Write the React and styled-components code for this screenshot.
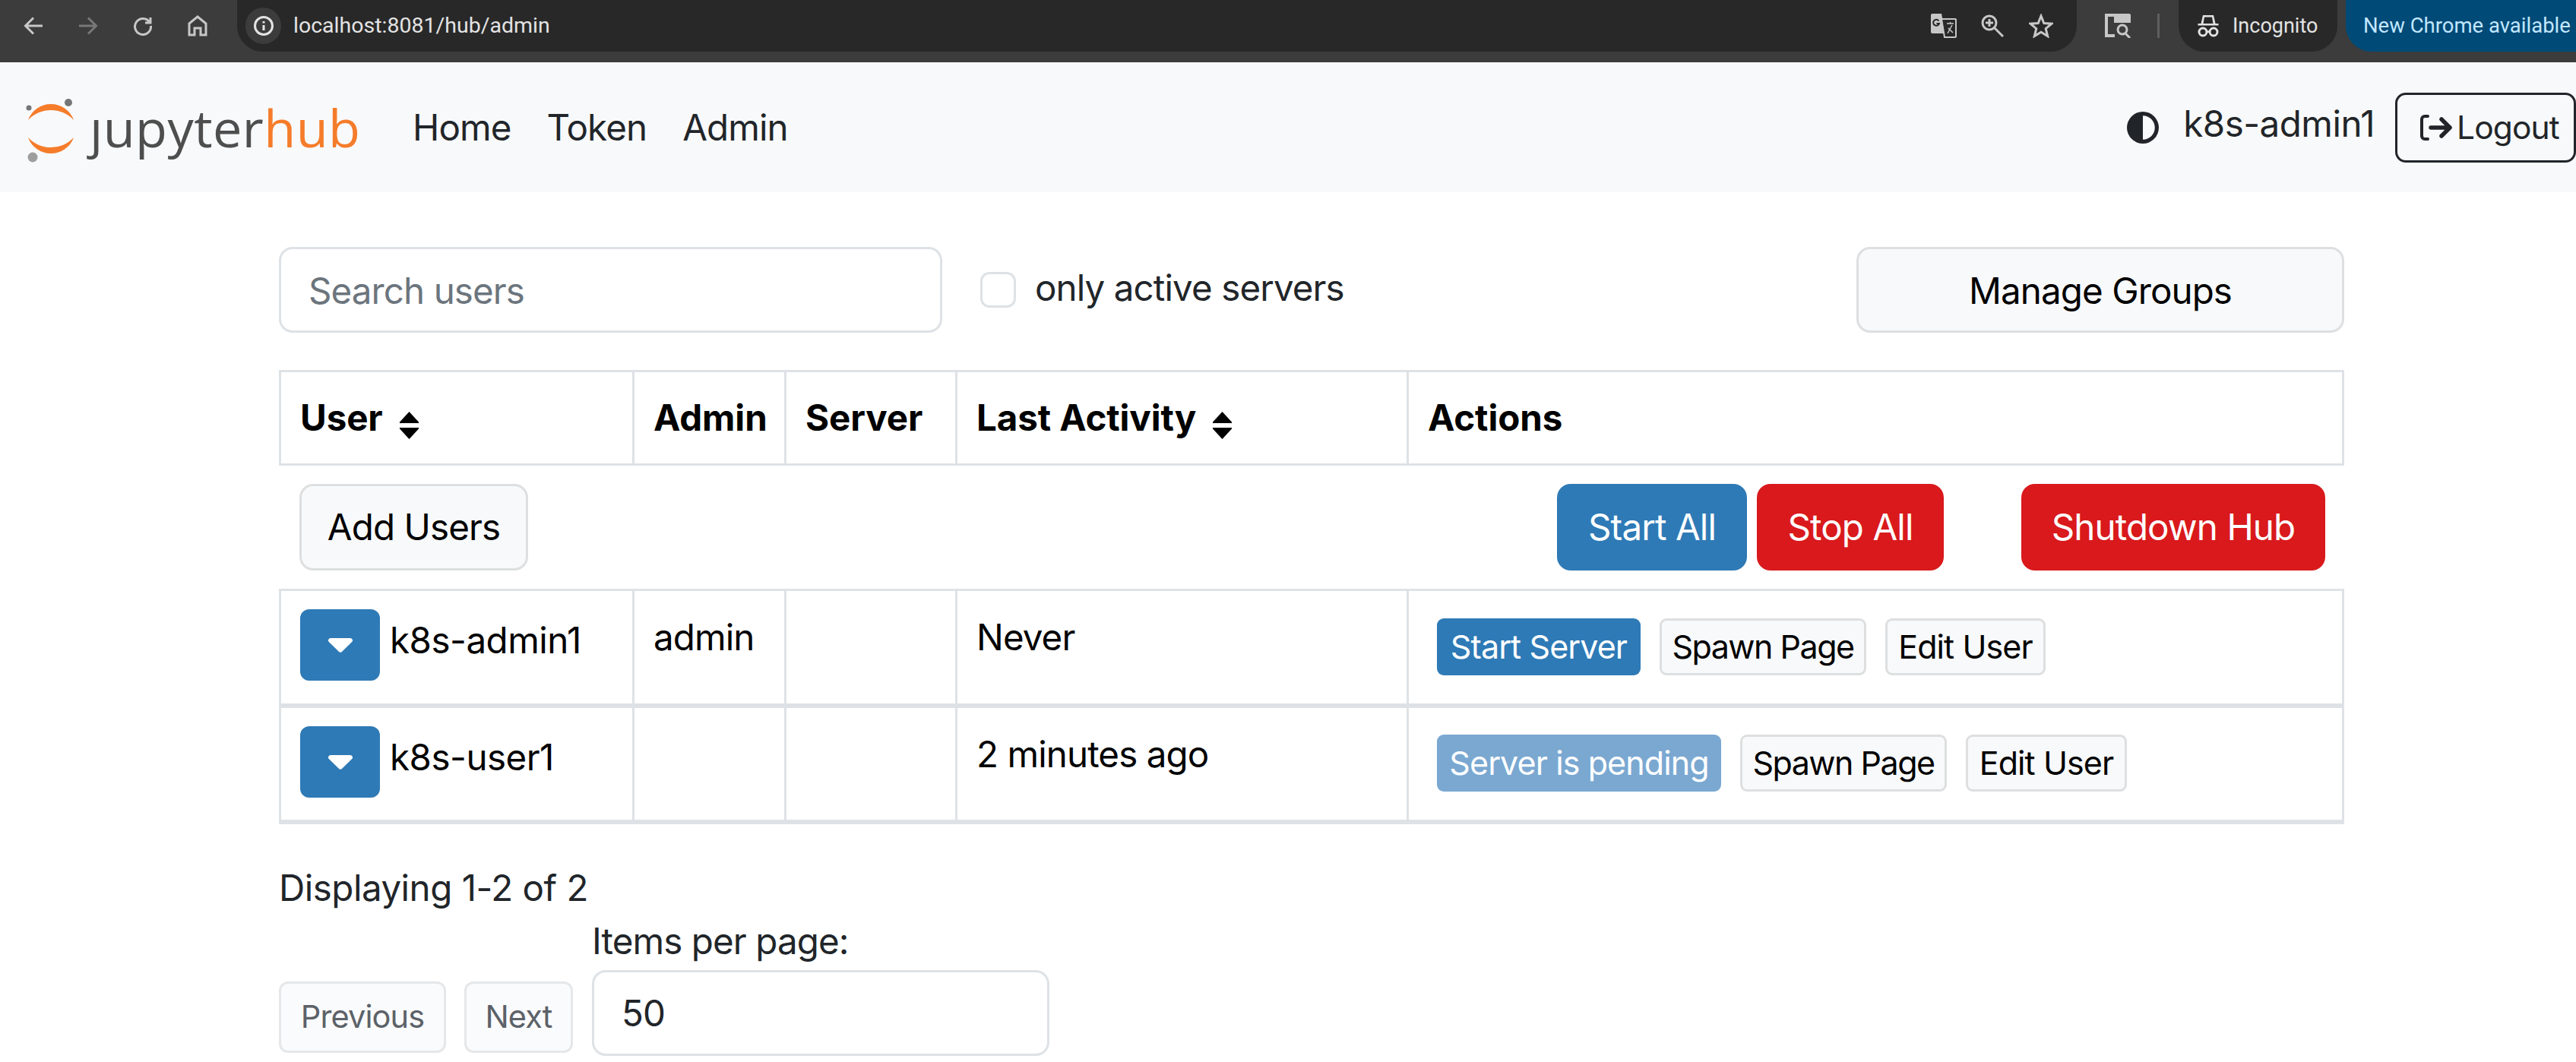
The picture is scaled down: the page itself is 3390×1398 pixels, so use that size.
import React from 'react'
import styled, { createGlobalStyle } from 'styled-components'
import { FaCircleHalfStroke } from 'react-icons/fa6'

const GlobalStyle = createGlobalStyle`
  html, body {
    margin: 0;
    padding: 0;
    background: #fff;
    overflow: hidden;
  }
  body {
    width: 3390px;
    height: 1398px;
    font-family: Inter, "Liberation Sans", sans-serif;
    font-size: 47.5px;
    line-height: 1.5;
    letter-spacing: -0.9px;
    color: #212529;
  }
  * {
    box-sizing: border-box;
  }
`

const Page = styled('div')`
  width: 3390px;
  height: 1398px;
  overflow: hidden;
`

/* browser chrome */
const ChromeBar = styled('div')`
  display: flex;
  align-items: flex-start;
  height: 82px;
  padding-left: 8px;
  overflow: hidden;
  background: #3c3c3c;
  font-family: Roboto, sans-serif;
  font-size: 27px;
  line-height: 68px;
  letter-spacing: 0;
`

const ChromeIcon = styled('div')`
  display: flex;
  flex: none;
  align-items: center;
  justify-content: center;
  width: ${props => props.size || 72}px;
  height: 68px;
  margin-left: ${props => props.offset || 0}px;
  color: ${props => props.dim ? '#787878' : '#c7c7c7'};
`

const UrlPill = styled('div')`
  display: flex;
  flex: none;
  align-items: center;
  width: 2421px;
  height: 68px;
  margin-left: 16px;
  padding: 0 15px 0 11px;
  border-radius: 0 0 34px 34px;
  background: #282828;
  color: #e3e3e3;
`

const InfoBadge = styled('div')`
  display: flex;
  align-items: center;
  justify-content: center;
  width: 47px;
  height: 48px;
  margin-right: 16px;
  border-radius: 24px;
  background: #3c3c3c;
  color: #e3e3e3;
`

const UrlText = styled('span')`
  flex: 1;
  font-size: 28.5px;
`

const Separator = styled('div')`
  flex: none;
  width: 3px;
  height: 32px;
  margin: 18px 0 0 20px;
  background: #5f5f5f;
`

const IncognitoPill = styled('div')`
  display: flex;
  flex: none;
  align-items: center;
  gap: 17px;
  width: 209px;
  height: 68px;
  margin-left: 25px;
  padding-left: 24px;
  border-radius: 0 0 34px 34px;
  background: #282828;
  color: #e3e3e3;
`

const UpdatePill = styled('div')`
  flex: none;
  width: 320px;
  height: 68px;
  margin-left: 11px;
  padding-left: 23px;
  border-radius: 0 0 0 34px;
  background: #004a77;
  color: #c2e7ff;
  font-size: 27.5px;
  white-space: nowrap;
`

/* jupyterhub navbar */
const Navbar = styled('nav')`
  display: flex;
  align-items: center;
  height: 171px;
  padding-left: 30px;
  background: #f8f9fa;
`

const LogoMark = styled('svg')`
  flex: none;
  width: 74px;
  height: 102px;
  margin-top: 6px;
`

const LogoText = styled('div')`
  width: 352px;
  margin-left: 14px;
  color: #4e4e4e;
  font-family: "Open Sans", sans-serif;
  font-size: 68.5px;
  line-height: 80px;
  letter-spacing: 0.4px;
  white-space: nowrap;
`

const LogoHub = styled('span')`
  color: #f57c2a;
`

const NavLinks = styled('div')`
  display: flex;
  gap: 47px;
  margin-left: 73px;
`

const NavLink = styled('a')`
  color: #212529;
`

const NavRight = styled('div')`
  display: flex;
  align-items: center;
  margin-left: auto;
`

const ThemeToggle = styled('div')`
  display: flex;
  margin-right: 32px;
  color: #212529;
`

const UserName = styled('span')`
  margin-right: 27px;
  position: relative;
  top: -5px;
  letter-spacing: -0.5px;
`

const LogoutButton = styled('div')`
  display: flex;
  flex: none;
  align-items: center;
  gap: 5px;
  width: 238px;
  height: 92px;
  padding-left: 29px;
  border: 3px solid #212529;
  border-radius: 14px;
  font-size: 42.5px;
  white-space: nowrap;
`

/* admin content */
const Content = styled('main')`
  width: 2718px;
  margin-left: 367px;
`

const Toolbar = styled('div')`
  display: flex;
  align-items: center;
  height: 113px;
  margin-top: 72px;
`

const TextInput = styled('div')`
  display: flex;
  align-items: center;
  width: ${props => props.width}px;
  height: 113px;
  padding: 2px 0 0 36px;
  border: 3px solid #dee2e6;
  border-radius: 18px;
  background: #fff;
  color: ${props => props.muted ? '#6c757d' : '#212529'};
`

const CheckBox = styled('div')`
  width: 47px;
  height: 47px;
  margin: 0 25px 0 50px;
  border: 3px solid #dee2e6;
  border-radius: 12px;
`

const CheckLabel = styled('span')`
  position: relative;
  top: -3px;
`

const Button = styled('div')`
  display: flex;
  flex: none;
  align-items: center;
  justify-content: center;
  width: ${props => props.width}px;
  height: ${props => props.height || 114}px;
  border-radius: 18px;
  background: ${props => props.bg || '#f8f9fa'};
  border: ${props => props.bg ? 'none' : '3px solid #dedfe0'};
  color: ${props => props.color || '#000'};
  white-space: nowrap;
`

const SmallButton = styled(Button)`
  height: 75px;
  border-radius: 9px;
  font-size: 43px;
`

const SpawnButton = styled(SmallButton)`
  letter-spacing: -1.5px;
`

const ManageButton = styled(Button)`
  margin-left: auto;
  padding-top: 2px;
`

const UserTable = styled('table')`
  width: 2718px;
  margin-top: 49px;
  border-collapse: separate;
  border-spacing: 0;
  table-layout: fixed;
  color: #000;
`

const HeadCell = styled('th')`
  height: 126px;
  padding: 0 24px 0 25px;
  border-top: 3px solid #dee2e6;
  border-bottom: 3px solid #dee2e6;
  border-right: 3px solid #dee2e6;
  font-weight: 700;
  letter-spacing: -0.1px;
  text-align: left;
  white-space: nowrap;

  &:first-child {
    border-left: 3px solid #dee2e6;
  }
`

const SortIcon = styled('svg')`
  width: 29px;
  height: 38px;
  margin-left: 20px;
  vertical-align: -12px;
`

const ActionRowCell = styled('td')`
  height: 162px;
  padding: 0 25px 0 27px;
`

const ActionRow = styled('div')`
  display: flex;
  align-items: center;
  gap: 13px;
`

const SpacedButton = styled(Button)`
  margin-left: ${props => props.offset || 0}px;
`

const Cell = styled('td')`
  height: ${props => props.height}px;
  padding: ${props => props.top}px 24px 0 25px;
  border-top: ${props => props.first ? 3 : 0}px solid #dee2e6;
  border-bottom: 6px solid #dee2e6;
  border-right: 3px solid #dee2e6;
  vertical-align: top;

  &:first-child {
    border-left: 3px solid #dee2e6;
  }
`

const UserCell = styled('div')`
  display: flex;
  align-items: center;
  gap: 13px;
  white-space: nowrap;
`

const UserLabel = styled('span')`
  margin-bottom: 12px;
  letter-spacing: -0.5px;
`

const CaretButton = styled('div')`
  display: flex;
  flex: none;
  align-items: center;
  justify-content: center;
  width: 105px;
  height: 94px;
  border-radius: 12px;
  background: #2e7ab6;
`

const CellText = styled('div')`
  margin-top: 1px;
  white-space: nowrap;
`

const ActionsCell = styled('div')`
  display: flex;
  gap: 25px;
  margin-left: 12px;
`

const Footer = styled('div')`
  margin-top: 48px;
`

const Summary = styled('div')`
  letter-spacing: -0.5px;
`

const Pager = styled('div')`
  display: flex;
  align-items: flex-end;
  margin-top: -1px;
`

const PagerButton = styled('div')`
  display: flex;
  align-items: center;
  justify-content: center;
  width: ${props => props.width}px;
  height: 94px;
  margin: 0 ${props => props.gap}px 4px 0;
  border: 3px solid #e5e7e9;
  border-radius: 12px;
  background: #fafbfc;
  color: #5c6268;
  font-size: 41.5px;
`

const PageSize = styled('div')`
  display: flex;
  flex-direction: column;
`

const PageSizeLabel = styled('span')`
  margin-bottom: 2px;
`

const Triangle = () => (
  <svg width="32" height="19" viewBox="0 0 32 19">
    <path d="M3 0h26a3 3 0 0 1 2.400 4.800L18.400 17.600a3.400 3.400 0 0 1-4.800 0L.6 4.800A3 3 0 0 1 3 0z" fill="#fff" />
  </svg>
)

const Sort = () => (
  <SortIcon viewBox="0 0 28 38">
    <path d="M14 1 26 14a1 1 0 0 1-1 2H3a1 1 0 0 1-1-2z" fill="#000" />
    <path d="M14 37 26 24a1 1 0 0 0-1-2H3a1 1 0 0 0-1 2z" fill="#000" />
  </SortIcon>
)

const stroke = { fill: 'none', stroke: 'currentColor', strokeWidth: 3 }

const App = () => (
  <Page>
    <GlobalStyle />
    <ChromeBar>
      <ChromeIcon>
        <svg width="26" height="24" viewBox="0 0 26 24" {...stroke}><path d="M25 12H3M13 1.500 2.500 12 13 22.500" /></svg>
      </ChromeIcon>
      <ChromeIcon dim>
        <svg width="26" height="24" viewBox="0 0 26 24" {...stroke}><path d="M1 12h22M13 1.500 23.500 12 13 22.500" /></svg>
      </ChromeIcon>
      <ChromeIcon>
        <svg width="26" height="26" viewBox="0 0 26 26" {...stroke}><path d="M22 8.500A10.500 10.500 0 1 0 23.500 13M23 2v7h-7" /></svg>
      </ChromeIcon>
      <ChromeIcon>
        <svg width="26" height="28" viewBox="0 0 26 28" {...stroke}><path d="M2 26V11L13 2l11 9v15h-7v-9H9v9z" /></svg>
      </ChromeIcon>
      <UrlPill>
        <InfoBadge>
          <svg width="26" height="26" viewBox="0 0 26 26" {...stroke}>
            <circle cx="13" cy="13" r="11.500" />
            <path d="M13 12v7M13 7v2.500" />
          </svg>
        </InfoBadge>
        <UrlText>localhost:8081/hub/admin</UrlText>
        <ChromeIcon size={64}>
          <svg width="34" height="32" viewBox="0 0 34 32">
            <path d="M2 0h12l5 26H2a2 2 0 0 1-2-2V2a2 2 0 0 1 2-2z" fill="#c7c7c7" />
            <path d="M14 7h18a1 1 0 0 1 1 1v22a1 1 0 0 1-1 1H18z" fill="#282828" stroke="#c7c7c7" strokeWidth="2" />
            <path d="M21 13h9M25.500 11v2M22 26l6-11M23 19l6 6" stroke="#c7c7c7" strokeWidth="1.500" fill="none" />
            <path d="M10.500 9.500A4 4 0 1 0 11 13H7.500" stroke="#282828" strokeWidth="2" fill="none" />
          </svg>
        </ChromeIcon>
        <ChromeIcon size={64}>
          <svg width="30" height="30" viewBox="0 0 30 30" {...stroke}>
            <circle cx="11" cy="11" r="9" />
            <path d="M18 18l11 11M6 11h10M11 6v10" />
          </svg>
        </ChromeIcon>
        <ChromeIcon size={64}>
          <svg width="32" height="32" viewBox="0 0 32 32" {...stroke}>
            <path d="M16 3l3.800 9.500 10.200.7-7.800 6.500 2.500 9.900L16 24.200 7.300 29.600l2.500-9.900L2 13.200l10.200-.7z" />
          </svg>
        </ChromeIcon>
      </UrlPill>
      <ChromeIcon size={64} offset={22}>
        <svg width="36" height="32" viewBox="0 0 36 32" fill="none">
          <path d="M13 2H3v27h11" stroke="#c7c7c7" strokeWidth="4" />
          <path d="M13 0h20a2 2 0 0 1 2 2v10H13z" fill="#c7c7c7" />
          <circle cx="24" cy="21" r="6" stroke="#c7c7c7" strokeWidth="3" />
          <path d="M28 26l6 6" stroke="#c7c7c7" strokeWidth="3" />
        </svg>
      </ChromeIcon>
      <Separator />
      <IncognitoPill>
        <svg width="30" height="30" viewBox="0 0 30 30" fill="#e3e3e3">
          <path d="M8 1h14l2.500 11h4v2.500H1.500V12h4zM10 3.500 8.500 12h13L20 3.500z" fillRule="evenodd" />
          <circle cx="8" cy="23" r="5" fill="none" stroke="#e3e3e3" strokeWidth="3" />
          <circle cx="22" cy="23" r="5" fill="none" stroke="#e3e3e3" strokeWidth="3" />
          <path d="M12 21.500h6v2.500h-6z" />
        </svg>
        <span>Incognito</span>
      </IncognitoPill>
      <UpdatePill>New Chrome available</UpdatePill>
    </ChromeBar>

    <Navbar>
      <LogoMark viewBox="30 120 74 102">
        <path d="M37 158A31.900 31.900 0 0 1 97 158A41 41 0 0 0 37 158z" fill="#f57c2a" />
        <path d="M37 181A31.900 31.900 0 0 0 97 181A41 41 0 0 1 37 181z" fill="#f57c2a" />
        <circle cx="38" cy="142" r="3.500" fill="#767677" />
        <circle cx="90" cy="135" r="5" fill="#767677" />
        <circle cx="43" cy="207" r="6.500" fill="#9e9e9e" />
      </LogoMark>
      <LogoText>ȷupyter<LogoHub>hub</LogoHub></LogoText>
      <NavLinks>
        <NavLink>Home</NavLink>
        <NavLink>Token</NavLink>
        <NavLink>Admin</NavLink>
      </NavLinks>
      <NavRight>
        <ThemeToggle><FaCircleHalfStroke size={42} /></ThemeToggle>
        <UserName>k8s-admin1</UserName>
        <LogoutButton>
          <svg width="44" height="36" viewBox="0 0 44 36" fill="none" stroke="#212529" strokeLinecap="round" strokeLinejoin="round">
            <path d="M11 3H7a4 4 0 0 0-4 4v22a4 4 0 0 0 4 4h4" strokeWidth="4" />
            <path d="M15 18h25M29 7l11 11-11 11" strokeWidth="5.500" />
          </svg>
          <span>Logout</span>
        </LogoutButton>
      </NavRight>
    </Navbar>

    <Content>
      <Toolbar>
        <TextInput width={873} muted>Search users</TextInput>
        <CheckBox />
        <CheckLabel>only active servers</CheckLabel>
        <ManageButton width={642} height={113}>Manage Groups</ManageButton>
      </Toolbar>

      <UserTable>
        <colgroup>
          <col style={{ width: 468 }} />
          <col style={{ width: 200 }} />
          <col style={{ width: 225 }} />
          <col style={{ width: 594 }} />
          <col />
        </colgroup>
        <thead>
          <tr>
            <HeadCell>User<Sort /></HeadCell>
            <HeadCell>Admin</HeadCell>
            <HeadCell>Server</HeadCell>
            <HeadCell>Last Activity<Sort /></HeadCell>
            <HeadCell>Actions</HeadCell>
          </tr>
        </thead>
        <tbody>
          <tr>
            <ActionRowCell colSpan={5}>
              <ActionRow>
                <Button width={301}>Add Users</Button>
                <SpacedButton width={250} bg="#2e7ab6" color="#fff" offset={1341}>Start All</SpacedButton>
                <Button width={246} bg="#d9191c" color="#fff">Stop All</Button>
                <SpacedButton width={400} bg="#d9191c" color="#fff" offset={89}>Shutdown Hub</SpacedButton>
              </ActionRow>
            </ActionRowCell>
          </tr>
          <tr>
            <Cell first height={157} top={24}>
              <UserCell>
                <CaretButton><Triangle /></CaretButton>
                <UserLabel>k8s-admin1</UserLabel>
              </UserCell>
            </Cell>
            <Cell first height={157} top={24}><CellText>admin</CellText></Cell>
            <Cell first height={157} top={24} />
            <Cell first height={157} top={24}><CellText>Never</CellText></Cell>
            <Cell first height={157} top={36}>
              <ActionsCell>
                <SmallButton width={268} bg="#2e7ab6" color="#fff">Start Server</SmallButton>
                <SpawnButton width={272}>Spawn Page</SpawnButton>
                <SmallButton width={211}>Edit User</SmallButton>
              </ActionsCell>
            </Cell>
          </tr>
          <tr>
            <Cell height={153} top={24}>
              <UserCell>
                <CaretButton><Triangle /></CaretButton>
                <UserLabel>k8s-user1</UserLabel>
              </UserCell>
            </Cell>
            <Cell height={153} top={25} />
            <Cell height={153} top={25} />
            <Cell height={153} top={24}><CellText>2 minutes ago</CellText></Cell>
            <Cell height={153} top={35}>
              <ActionsCell>
                <SmallButton width={374} bg="#7aa8d1" color="#fff">Server is pending</SmallButton>
                <SpawnButton width={272}>Spawn Page</SpawnButton>
                <SmallButton width={212}>Edit User</SmallButton>
              </ActionsCell>
            </Cell>
          </tr>
        </tbody>
      </UserTable>

      <Footer>
        <Summary>Displaying 1-2 of 2</Summary>
        <Pager>
          <PagerButton width={220} gap={24}>Previous</PagerButton>
          <PagerButton width={143} gap={25}>Next</PagerButton>
          <PageSize>
            <PageSizeLabel>Items per page:</PageSizeLabel>
            <TextInput width={602}>50</TextInput>
          </PageSize>
        </Pager>
      </Footer>
    </Content>
  </Page>
)

export default App
